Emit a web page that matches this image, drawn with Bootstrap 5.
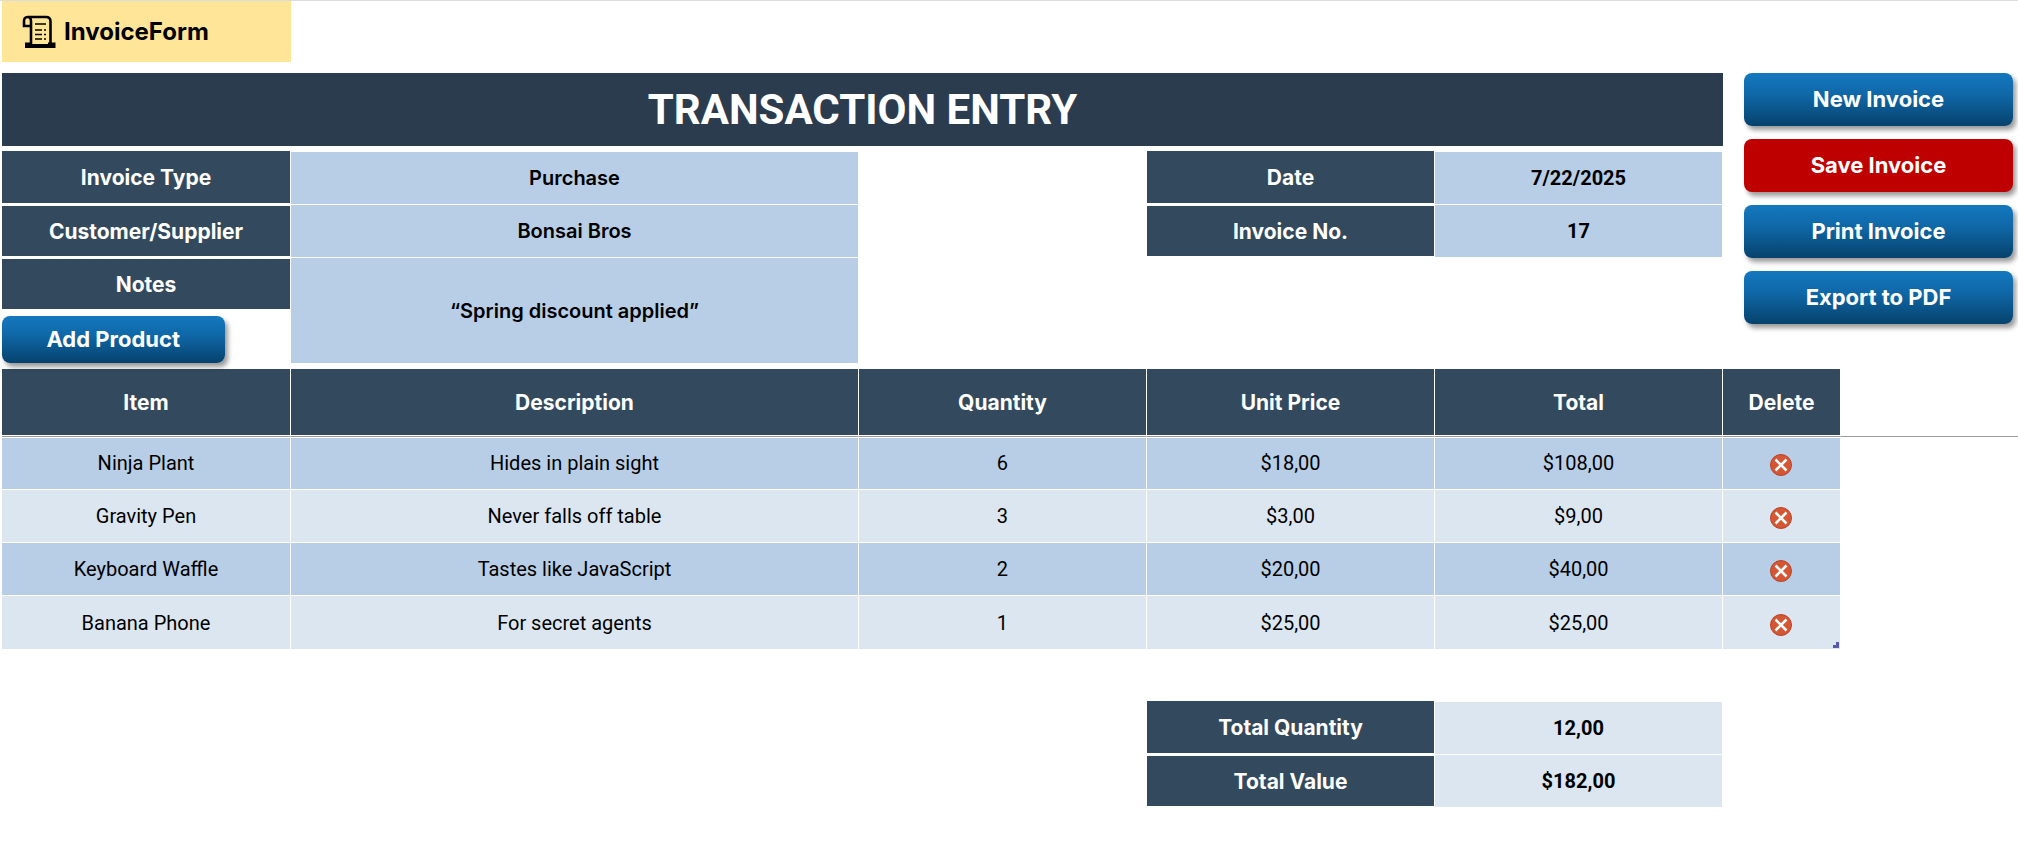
<!DOCTYPE html>
<html lang="en">
<head>
<meta charset="utf-8">
<meta name="viewport" content="width=device-width, initial-scale=1">
<title>InvoiceForm</title>
<link href="https://cdn.jsdelivr.net/npm/bootstrap@5.3.0/dist/css/bootstrap.min.css" rel="stylesheet">
<style>
  :root { --ink: #33495d; --banner: #2c3c4f; --field: #b8cde6; --pale: #dce6f0; --strong-font: Inter, "Liberation Sans", sans-serif; }
  body { font-family: Roboto, "Liberation Sans", sans-serif; font-size: 20px; line-height: 24px; color: #000; background: #fff; }
  .sheet { border-top: 1px solid #dcdcdc; padding-left: 2px; }
  .sheet-grid { display: grid; grid-template-columns: 289fr 568fr 288fr 288fr 288fr 295fr; }
  .brand-tab { height: 61px; background: #ffe598; font-family: var(--strong-font); font-size: 24px; font-weight: 700; padding-left: 20px; margin-bottom: 11px; }
  .main-area { grid-column: 1 / 6; }
  .banner { height: 73px; background: var(--banner); font-size: 42px; line-height: 48px; margin-bottom: 5px; }
  .form-grid { display: grid; grid-template-columns: 289fr 568fr 288fr 288fr 288fr; grid-template-rows: 54px 53px 53px 53px; }
  .tag { background: var(--ink); color: #fff; font-family: var(--strong-font); font-size: 21px; font-weight: 700; padding-top: 1px; border: solid #fff; border-width: 1px 1px 2px 0; }
  .tag.top { border-top-width: 0; }
  .entry { background: var(--field); color: #000; font-weight: 700; text-align: center; border: solid #fff; border-width: 0 1px 1px 0; border-radius: 0; min-width: 0; width: 100%; }
  .entry.words { font-family: var(--strong-font); font-size: 20px; font-weight: 600; }
  .entry.top { border-top-width: 1px; }
  .entry.pale { background: var(--pale); }
  .notes { grid-column: 2; grid-row: 3 / 5; }
  .c4 { grid-column: 4; } .c5 { grid-column: 5; } .c1 { grid-column: 1; }
  .r1 { grid-row: 1; } .r2 { grid-row: 2; } .r3 { grid-row: 3; } .r4 { grid-row: 4; }
  .action, .action:hover { background: linear-gradient(#1478be, #0f68a8 40%, #06426c); color: #fff; }
  .action { border: 0; border-radius: 8px; height: 53px; width: 100%; font-family: var(--strong-font); font-size: 22px; font-weight: 700; padding: 0; box-shadow: 3px 4px 5px rgba(0,0,0,.4); }
  .action.save { background: #bf0000; }
  .action.add { height: 47px; width: 77%; margin-top: 5px; }
  .side { gap: 13px; padding: 0 5px 0 21px; }
  .items { table-layout: fixed; margin-top: 5px; border-collapse: separate; border-spacing: 0; text-align: center; }
  .items > thead > tr > th { height: 68px; padding: 0; vertical-align: middle; background: var(--ink); color: #fff; font-family: var(--strong-font); font-size: 21px; font-weight: 700; border: solid #fff; border-width: 0 1px 1px 0; border-bottom-color: #9a9a9f; box-shadow: inset 0 -1px #fff; }
  .items > tbody > tr > td { position: relative; height: 53px; padding: 0; vertical-align: middle; color: #000; background: var(--pale); border: solid #fff; border-width: 0 1px 1px 0; box-shadow: none; }
  .items > tbody > tr:nth-child(odd) > td { background: var(--field); }
  .items > tbody > tr:first-child > td { box-shadow: inset 0 1px #fff; }
  .items > tbody > tr:last-child > td { border-bottom-width: 0; }
  .items > thead > tr > th.spare, .items > tbody > tr:nth-child(n) > td.spare { background: #fff; border-right: 0; }
  .remove { border: 0; background: none; padding: 4px 0 0; line-height: 0; }
  .handle { position: absolute; right: 1px; bottom: 1px; }
  .totals { grid-template-rows: 54px 53px; margin-top: 52px; }
</style>
</head>
<body>
<main class="sheet">
  <div class="sheet-grid">
    <div class="brand-tab d-flex align-items-center gap-2">
      <svg width="34" height="34" viewBox="0 0 34 34" fill="none" stroke="#000" stroke-width="2.6" aria-hidden="true">
        <path d="M9 29V6.500C9 3.500 7.800 2 5.500 2S2 3.500 2 6v5h7M5.500 2H24c3 0 4.500 1.500 4.500 4.500V29"/>
        <path d="M3 27.500h7v1.500h16v-1.500h7.500V33H3z" fill="#000" stroke="none"/>
        <path d="M13 9h11M13 15h7M13 19.500h7M13 24h7M22 15h2M22 19.500h2M22 24h2" stroke-width="1.700"/>
      </svg>
      <span>InvoiceForm</span>
    </div>
  </div>

  <div class="sheet-grid">
    <form class="main-area">
      <h1 class="banner d-flex align-items-center justify-content-center text-white fw-bold">TRANSACTION ENTRY</h1>
      <div class="form-grid">
        <label class="tag top c1 r1 d-flex align-items-center justify-content-center" for="type">Invoice Type</label>
        <input class="entry words top r1" id="type" value="Purchase">
        <label class="tag c1 r2 d-flex align-items-center justify-content-center" for="party">Customer/Supplier</label>
        <input class="entry words r2" id="party" value="Bonsai Bros">
        <label class="tag c1 r3 d-flex align-items-center justify-content-center" for="notes">Notes</label>
        <input class="entry words notes" id="notes" value="“Spring discount applied”">
        <div class="c1 r4"><button type="button" class="btn action add">Add Product</button></div>
        <label class="tag top c4 r1 d-flex align-items-center justify-content-center" for="date">Date</label>
        <input class="entry top c5 r1" id="date" value="7/22/2025">
        <label class="tag c4 r2 d-flex align-items-center justify-content-center" for="number">Invoice No.</label>
        <input class="entry c5 r2" id="number" value="17">
      </div>
    </form>
    <div class="side d-flex flex-column">
      <button type="button" class="btn action">New Invoice</button>
      <button type="button" class="btn action save">Save Invoice</button>
      <button type="button" class="btn action">Print Invoice</button>
      <button type="button" class="btn action">Export to PDF</button>
    </div>
  </div>

  <svg class="d-none" aria-hidden="true">
    <symbol id="cross" viewBox="0 0 22 22">
      <circle cx="11" cy="11" r="10.500" fill="#d65532" stroke="#b5452a"/>
      <path d="M5.500 5.500l11 11M16.500 5.500l-11 11" stroke="#fff" stroke-width="2.600"/>
    </symbol>
  </svg>
  <table class="table items mb-0">
    <colgroup>
      <col style="width:14.335%"><col style="width:28.175%"><col style="width:14.286%"><col style="width:14.286%"><col style="width:14.286%"><col style="width:5.853%"><col>
    </colgroup>
    <thead>
      <tr><th>Item</th><th>Description</th><th>Quantity</th><th>Unit Price</th><th>Total</th><th>Delete</th><th class="spare"></th></tr>
    </thead>
    <tbody>
      <tr><td>Ninja Plant</td><td>Hides in plain sight</td><td>6</td><td>$18,00</td><td>$108,00</td><td><button type="button" class="remove" aria-label="Delete Ninja Plant"><svg width="22" height="22"><use href="#cross"/></svg></button></td><td class="spare"></td></tr>
      <tr><td>Gravity Pen</td><td>Never falls off table</td><td>3</td><td>$3,00</td><td>$9,00</td><td><button type="button" class="remove" aria-label="Delete Gravity Pen"><svg width="22" height="22"><use href="#cross"/></svg></button></td><td class="spare"></td></tr>
      <tr><td>Keyboard Waffle</td><td>Tastes like JavaScript</td><td>2</td><td>$20,00</td><td>$40,00</td><td><button type="button" class="remove" aria-label="Delete Keyboard Waffle"><svg width="22" height="22"><use href="#cross"/></svg></button></td><td class="spare"></td></tr>
      <tr><td>Banana Phone</td><td>For secret agents</td><td>1</td><td>$25,00</td><td>$25,00</td><td><button type="button" class="remove" aria-label="Delete Banana Phone"><svg width="22" height="22"><use href="#cross"/></svg></button><svg class="handle" width="6" height="6" aria-hidden="true"><path d="M0 6V3h3V0h3v6z" fill="#5558b0"/></svg></td><td class="spare"></td></tr>
    </tbody>
  </table>

  <div class="sheet-grid totals">
    <label class="tag top c4 r1 d-flex align-items-center justify-content-center" for="quantity">Total Quantity</label>
    <input class="entry pale top c5 r1" id="quantity" value="12,00" readonly>
    <label class="tag c4 r2 d-flex align-items-center justify-content-center" for="value">Total Value</label>
    <input class="entry pale c5 r2" id="value" value="$182,00" readonly>
  </div>
</main>
<script src="https://cdn.jsdelivr.net/npm/bootstrap@5.3.0/dist/js/bootstrap.bundle.min.js"></script>
</body>
</html>
